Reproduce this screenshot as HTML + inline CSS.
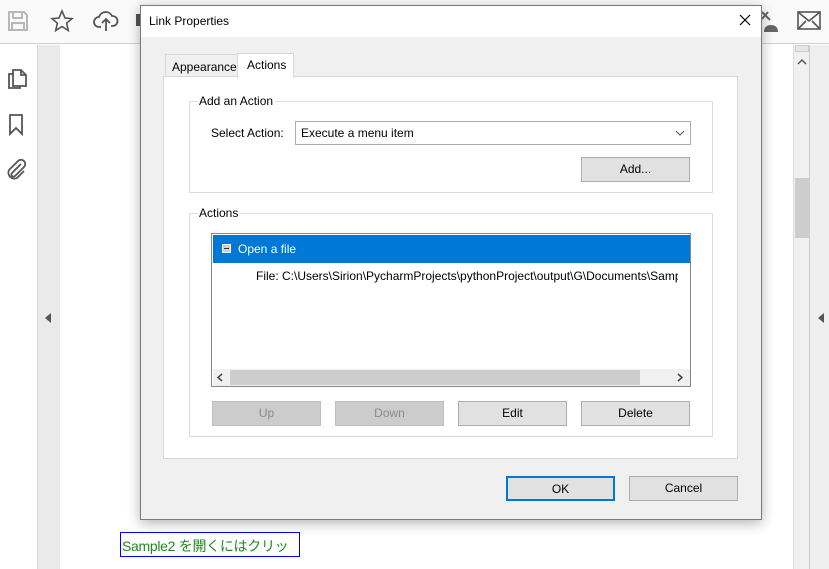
<!DOCTYPE html>
<html><head><meta charset="utf-8"><style>
*{box-sizing:border-box;margin:0;padding:0}
body{width:829px;height:569px;overflow:hidden;position:relative;background:#fff;font-family:"Segoe UI","Liberation Sans",sans-serif;font-size:12px;color:#000}
.a{position:absolute}
.btn{position:absolute;background:#e1e1e1;border:1px solid #adadad;text-align:center;line-height:23px;font-size:12px}
.dis{color:#8a8a8a;background:#cccccc;border-color:#bfbfbf}
.grp{position:absolute;border:1px solid #dcdcdc}
.gl{position:absolute;top:-8px;left:7px;background:#fff;padding:0 2px}
</style></head><body>
<div class="a" style="left:0;top:0;width:829px;height:44px;background:#fafafa;border-bottom:1px solid #d0d0d0"></div>
<svg class="a" style="left:7px;top:10px" width="22" height="22" viewBox="0 0 22 22" fill="none" stroke="#b8b8b8" stroke-width="2"><path d="M2 2h15l3 3v15H2z"/><path d="M6 2v6h9V2M5 20v-7h12v7"/></svg>
<svg class="a" style="left:50px;top:9px" width="24" height="24" viewBox="0 0 24 24" fill="none" stroke="#555" stroke-width="1.6"><path d="M12 2l3 7 7 .6-5.4 4.6 1.7 7.3L12 17.6 5.7 21.5l1.7-7.3L2 9.6 9 9z"/></svg>
<svg class="a" style="left:93px;top:9px" width="26" height="24" viewBox="0 0 26 24" fill="none" stroke="#555" stroke-width="1.8"><path d="M8 18H6a5 5 0 010-10 7 7 0 0113-1 5 5 0 011 10h-2"/><path d="M13 22V11M9 14l4-4 4 4"/></svg>
<div class="a" style="left:136px;top:14px;width:5px;height:12px;background:#555"></div>
<svg class="a" style="left:758px;top:8px" width="22" height="26" viewBox="0 0 22 26"><path d="M4 4l8 8M10 4l-6 7" stroke="#666" stroke-width="2" fill="none"/><path d="M6 24c0-5 3-7 7-7s7 2 7 7z" fill="#666"/></svg>
<svg class="a" style="left:797px;top:11px" width="24" height="19" viewBox="0 0 24 19" fill="none" stroke="#555" stroke-width="1.6"><rect x="1" y="1" width="22" height="17"/><path d="M1 1l11 9 11-9M1 18l8-8M23 18l-8-8"/></svg>
<div class="a" style="left:37px;top:45px;width:23px;height:524px;background:#eaeaea;border-left:1px solid #d6d6d6"></div>
<svg class="a" style="left:6px;top:66px" width="22" height="24" viewBox="0 0 22 24" fill="none" stroke="#555" stroke-width="1.8"><path d="M7 4h8l5 5v11H7z"/><path d="M15 4v5h5"/><path d="M7 8H3v14h11v-2"/></svg>
<svg class="a" style="left:8px;top:114px" width="16" height="22" viewBox="0 0 16 22" fill="none" stroke="#555" stroke-width="1.8"><path d="M2 1h12v19l-6-6-6 6z"/></svg>
<svg class="a" style="left:4px;top:158px" width="24" height="24" viewBox="0 0 24 24" fill="none" stroke="#555" stroke-width="1.8"><path d="M17 6l-9 9a2 2 0 003 3l9-9a4 4 0 00-6-6L5 12a6 6 0 008 8l7-7"/></svg>
<div class="a" style="left:45px;top:313px;width:0;height:0;border-top:5px solid transparent;border-bottom:5px solid transparent;border-right:6px solid #555"></div>
<div class="a" style="left:793px;top:45px;width:17px;height:524px;background:#f0f0f0;border-left:1px solid #ddd;border-right:1px solid #ccc"></div>
<div class="a" style="left:795px;top:178px;width:14px;height:60px;background:#cdcdcd"></div>
<div class="a" style="left:795px;top:45px;width:14px;height:7px;background:#e6e6e6;border:1px solid #ccc"></div>
<svg class="a" style="left:797px;top:58px" width="10" height="8"><path d="M1 6l4-4 4 4" stroke="#555" stroke-width="1.5" fill="none"/></svg>
<div class="a" style="left:810px;top:45px;width:19px;height:524px;background:#efefef"></div>
<div class="a" style="left:818px;top:313px;width:0;height:0;border-top:5px solid transparent;border-bottom:5px solid transparent;border-right:6px solid #555"></div>
<div class="a" style="left:120px;top:532px;width:180px;height:25px;border:1px solid #0000ff;color:#1e8a1e;font-family:'Liberation Sans','Noto Sans CJK JP',sans-serif;font-size:14px;line-height:26px;padding-left:1px;white-space:nowrap;overflow:hidden;letter-spacing:-0.3px">Sample2 を開くにはクリッ</div>
<div class="a" style="left:140px;top:5px;width:622px;height:515px;background:#f0f0f0;border:1px solid #7a7a7a;box-shadow:0 3px 12px rgba(0,0,0,.3)">
  <div class="a" style="left:0;top:0;width:620px;height:31px;background:#fff"></div>
  <div class="a" style="left:8px;top:8px;font-size:12px">Link Properties</div>
  <svg class="a" style="left:598px;top:8px" width="12" height="12"><path d="M1 1l10 10M11 1L1 11" stroke="#000" stroke-width="1.2"/></svg>
  <div class="a" style="left:24px;top:48px;width:73px;height:23px;background:#f0f0f0;border:1px solid #d9d9d9;border-bottom:none;padding:5px 0 0 6px">Appearance</div>
  <div class="a" style="left:22px;top:70px;width:575px;height:383px;background:#fff;border:1px solid #d9d9d9"></div>
  <div class="a" style="left:96px;top:47px;width:57px;height:25px;background:#fff;border:1px solid #d9d9d9;border-bottom:none;padding:4px 0 0 9px">Actions</div>
  <div class="grp" style="left:48px;top:95px;width:524px;height:92px;background:#fff"><span class="gl">Add an Action</span></div>
  <div class="a" style="left:70px;top:120px">Select Action:</div>
  <div class="a" style="left:154px;top:115px;width:396px;height:24px;background:#fff;border:1px solid #adadad;padding:4px 0 0 5px">Execute a menu item</div>
  <div class="a" style="left:528px;top:116px;width:21px;height:22px;background:#fff"></div>
  <svg class="a" style="left:534px;top:124px" width="10" height="6"><path d="M1 1l4 4 4-4" stroke="#555" stroke-width="1" fill="none"/></svg>
  <div class="btn" style="left:440px;top:151px;width:109px;height:25px">Add...</div>
  <div class="grp" style="left:48px;top:207px;width:524px;height:224px;background:#fff"><span class="gl">Actions</span></div>
  <div class="a" style="left:70px;top:227px;width:480px;height:154px;background:#fff;border:1px solid #828790;overflow:hidden">
    <div class="a" style="left:1px;top:1px;width:477px;height:28px;background:#0078d7;color:#fff;padding:7px 0 0 25px">Open a file</div>
    <div class="a" style="left:10px;top:10px;width:9px;height:9px;background:#d0d0d0;border:1px solid #fff"></div>
    <div class="a" style="left:12px;top:14px;width:5px;height:1px;background:#333"></div>
    <div class="a" style="left:44px;top:35px;white-space:nowrap">File: C:\Users\Sirion\PycharmProjects\pythonProject\output\G\Documents\Sample2.pdf</div>
    <div class="a" style="left:466px;top:30px;width:12px;height:105px;background:#fff"></div>
    <div class="a" style="left:1px;top:135px;width:477px;height:17px;background:#f0f0f0"></div>
    <div class="a" style="left:18px;top:136px;width:410px;height:15px;background:#cdcdcd"></div>
    <svg class="a" style="left:4px;top:139px" width="8" height="9"><path d="M6 1L2 4.5 6 8" stroke="#444" stroke-width="1.5" fill="none"/></svg>
    <svg class="a" style="left:464px;top:139px" width="8" height="9"><path d="M2 1l4 3.5L2 8" stroke="#444" stroke-width="1.5" fill="none"/></svg>
  </div>
  <div class="btn dis" style="left:71px;top:395px;width:109px;height:25px">Up</div>
  <div class="btn dis" style="left:194px;top:395px;width:109px;height:25px">Down</div>
  <div class="btn" style="left:317px;top:395px;width:109px;height:25px">Edit</div>
  <div class="btn" style="left:440px;top:395px;width:109px;height:25px">Delete</div>
  <div class="btn" style="left:365px;top:470px;width:109px;height:25px;border:2px solid #0078d7;line-height:22px">OK</div>
  <div class="btn" style="left:488px;top:470px;width:109px;height:25px">Cancel</div>
</div>
</body></html>
